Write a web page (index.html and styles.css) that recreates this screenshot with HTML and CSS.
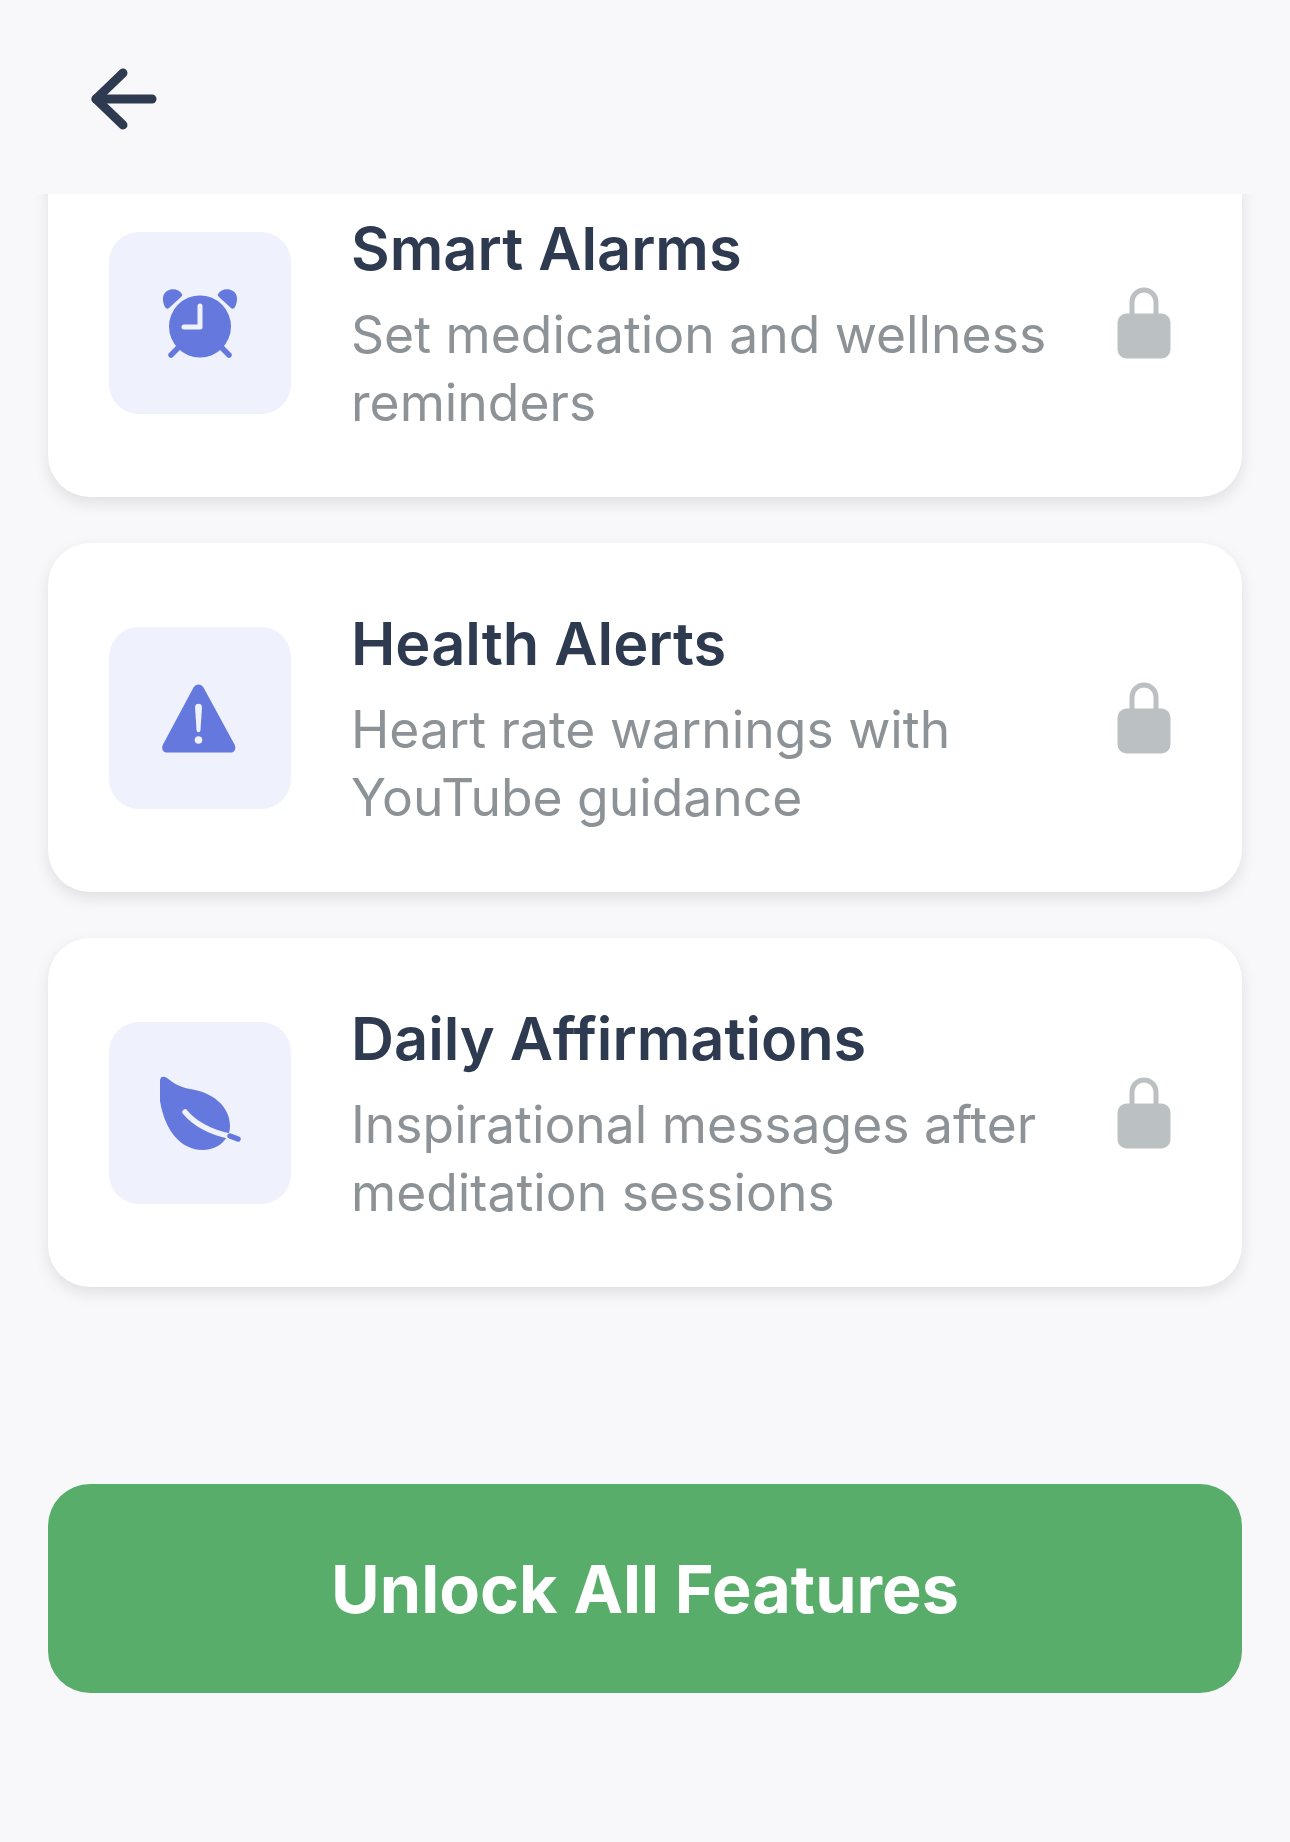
FILE: index.html
```html
<!DOCTYPE html>
<html lang="en">
<head>
  <meta charset="UTF-8">
  <title>Premium Features</title>
  <link rel="stylesheet" href="styles.css">
</head>
<body>

  <header class="top-bar">
    <button class="back-btn" aria-label="Back">
      <svg width="66" height="62" viewBox="0 0 66 62" fill="none" stroke="#2d3a4f" stroke-width="9" stroke-linecap="round" stroke-linejoin="round">
        <path d="M61 31H5"/>
        <path d="M32 5L5 31L32 57"/>
      </svg>
    </button>
  </header>

  <div class="feature-scroll">
    <div class="feature-list">

      <div class="feature-card">
        <div class="icon-box">
          <svg width="76" height="72" viewBox="0 0 76 72">
            <g fill="#6478de">
              <path d="M3 20C0 14 0 7 5 4c5-3 12-2 15 3 .5 1 0 2-1 3L7 21c-1 1-3 1-4-1z"/>
              <path d="M73 20c3-6 3-13-2-16-5-3-12-2-15 3-.5 1 0 2 1 3l12 11c1 1 3 1 4-1z"/>
              <circle cx="38" cy="39.500" r="31"/>
            </g>
            <path d="M16 61l-7 7M60 61l7 7" fill="none" stroke="#6478de" stroke-width="5.500" stroke-linecap="round"/>
            <path d="M38 19v21H22" fill="none" stroke="#eff1fd" stroke-width="5" stroke-linecap="round" stroke-linejoin="round"/>
          </svg>
        </div>
        <div class="feature-text">
          <h3>Smart Alarms</h3>
          <p>Set medication and wellness reminders</p>
        </div>
        <svg class="lock" width="54" height="72" viewBox="0 0 54 72">
          <path d="M15 28V15a12 12 0 0 1 24 0v13" fill="none" stroke="#bbc0c3" stroke-width="5"/>
          <rect x="0.500" y="26.500" width="53" height="45" rx="9" fill="#bbc0c3"/>
        </svg>
      </div>

      <div class="feature-card">
        <div class="icon-box">
          <svg width="76" height="72" viewBox="0 0 76 72">
            <path d="M31.500 5.500c2.500-4 7.500-4 10 0l31 57c2 4 0 8-4 8H5c-4 0-6-4-4-8z" fill="#6478de"/>
            <path d="M33 25c0-4.500 7-4.500 7 0l-1.500 23c-.2 3-3.800 3-4 0z" fill="#eff1fd"/>
            <circle cx="36.500" cy="58" r="3.800" fill="#eff1fd"/>
          </svg>
        </div>
        <div class="feature-text">
          <h3>Health Alerts</h3>
          <p>Heart rate warnings with YouTube guidance</p>
        </div>
        <svg class="lock" width="54" height="72" viewBox="0 0 54 72">
          <path d="M15 28V15a12 12 0 0 1 24 0v13" fill="none" stroke="#bbc0c3" stroke-width="5"/>
          <rect x="0.500" y="26.500" width="53" height="45" rx="9" fill="#bbc0c3"/>
        </svg>
      </div>

      <div class="feature-card">
        <div class="icon-box">
          <svg width="82" height="74" viewBox="0 0 82 74">
            <path d="M1 5C1 0 5 0 8 2c6 5 13 9 23 11 22 3 40 17 40 37 0 4-1 8-3 11-5 8-14 13-24 13C22 74 6 55 1 25z" fill="#6478de"/>
            <path d="M26 36c10 12 26 20 44 24" fill="none" stroke="#eff1fd" stroke-width="5.500" stroke-linecap="round"/>
            <path d="M71 60l8 3" fill="none" stroke="#6478de" stroke-width="5.500" stroke-linecap="round"/>
          </svg>
        </div>
        <div class="feature-text">
          <h3>Daily Affirmations</h3>
          <p>Inspirational messages after meditation sessions</p>
        </div>
        <svg class="lock" width="54" height="72" viewBox="0 0 54 72">
          <path d="M15 28V15a12 12 0 0 1 24 0v13" fill="none" stroke="#bbc0c3" stroke-width="5"/>
          <rect x="0.500" y="26.500" width="53" height="45" rx="9" fill="#bbc0c3"/>
        </svg>
      </div>

    </div>
  </div>

  <div class="bottom-bar">
    <button class="unlock-btn">Unlock All Features</button>
  </div>

</body>
</html>
```

FILE: styles.css
```css
* {
  box-sizing: border-box;
}

body {
  margin: 0;
  height: 1842px;
  overflow: hidden;
  display: flex;
  flex-direction: column;
  background: #f8f8fb;
  font-family: Inter, "Noto Sans", sans-serif;
}

.top-bar {
  height: 194px;
  padding: 68px 0 0 91px;
  flex-shrink: 0;
}

.back-btn {
  display: block;
  padding: 0;
  border: none;
  background: none;
}

/* list is scrolled a little, so the first card is cut by the header */
.feature-scroll {
  height: 1290px;
  flex-shrink: 0;
  overflow: hidden;
  padding: 0 48px;
}

.feature-list {
  display: flex;
  flex-direction: column;
  gap: 46px;
  margin-top: -46px;
}

.feature-card {
  height: 349px;
  display: flex;
  align-items: center;
  padding: 0 71px 0 61px;
  background: white;
  border-radius: 42px;
  box-shadow: 0 6px 16px rgba(0, 0, 0, 0.1);
}

.icon-box {
  width: 182px;
  height: 182px;
  flex-shrink: 0;
  display: flex;
  align-items: center;
  justify-content: center;
  background: #eff1fd;
  border-radius: 30px;
}

.feature-text {
  flex: 1;
  margin-left: 60px;
  padding-top: 4px;
}

.feature-text h3 {
  margin: 0 0 18px;
  font-size: 59.5px;
  line-height: 68px;
  font-weight: 600;
  color: #2d3a4f;
}

.feature-text p {
  margin: 0;
  font-size: 51.6px;
  line-height: 68px;
  color: #8d9296;
}

.lock {
  flex-shrink: 0;
}

.bottom-bar {
  padding: 0 48px;
}

.unlock-btn {
  display: block;
  width: 100%;
  height: 209px;
  border: none;
  border-radius: 42px;
  background: #59ad6b;
  color: white;
  font-family: Inter, "Noto Sans", sans-serif;
  font-size: 66.5px;
  font-weight: 700;
}
```
